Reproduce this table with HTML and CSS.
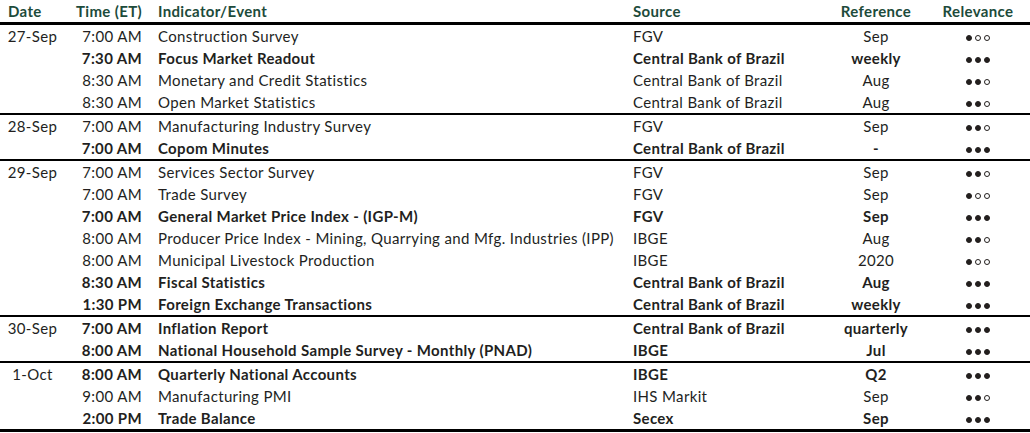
FILE: index.html
```html
<!DOCTYPE html>
<html>
<head>
<meta charset="utf-8">
<link rel="stylesheet" href="styles.css">
</head>
<body>
<table class="cal">
  <colgroup>
    <col class="c-date"><col class="c-time"><col class="c-ind"><col class="c-src"><col class="c-ref"><col class="c-rel">
  </colgroup>
  <thead>
    <tr><th class="date h-date">Date</th><th class="time">Time (ET)</th><th class="ind">Indicator/Event</th><th class="src">Source</th><th class="ref">Reference</th><th class="rel">Relevance</th></tr>
  </thead>
  <tbody>
    <tr><td class="date">27-Sep</td><td class="time">7:00 AM</td><td class="ind">Construction Survey</td><td class="src">FGV</td><td class="ref">Sep</td><td class="rel"><span class="dots"><i class="on"></i><i></i><i></i></span></td></tr>
    <tr class="b"><td class="date"></td><td class="time">7:30 AM</td><td class="ind">Focus Market Readout</td><td class="src">Central Bank of Brazil</td><td class="ref">weekly</td><td class="rel"><span class="dots"><i class="on"></i><i class="on"></i><i class="on"></i></span></td></tr>
    <tr><td class="date"></td><td class="time">8:30 AM</td><td class="ind">Monetary and Credit Statistics</td><td class="src">Central Bank of Brazil</td><td class="ref">Aug</td><td class="rel"><span class="dots"><i class="on"></i><i class="on"></i><i></i></span></td></tr>
    <tr><td class="date"></td><td class="time">8:30 AM</td><td class="ind">Open Market Statistics</td><td class="src">Central Bank of Brazil</td><td class="ref">Aug</td><td class="rel"><span class="dots"><i class="on"></i><i class="on"></i><i></i></span></td></tr>
  </tbody>
  <tbody>
    <tr><td class="date">28-Sep</td><td class="time">7:00 AM</td><td class="ind">Manufacturing Industry Survey</td><td class="src">FGV</td><td class="ref">Sep</td><td class="rel"><span class="dots"><i class="on"></i><i class="on"></i><i></i></span></td></tr>
    <tr class="b"><td class="date"></td><td class="time">7:00 AM</td><td class="ind">Copom Minutes</td><td class="src">Central Bank of Brazil</td><td class="ref">-</td><td class="rel"><span class="dots"><i class="on"></i><i class="on"></i><i class="on"></i></span></td></tr>
  </tbody>
  <tbody>
    <tr><td class="date">29-Sep</td><td class="time">7:00 AM</td><td class="ind">Services Sector Survey</td><td class="src">FGV</td><td class="ref">Sep</td><td class="rel"><span class="dots"><i class="on"></i><i class="on"></i><i></i></span></td></tr>
    <tr><td class="date"></td><td class="time">7:00 AM</td><td class="ind">Trade Survey</td><td class="src">FGV</td><td class="ref">Sep</td><td class="rel"><span class="dots"><i class="on"></i><i></i><i></i></span></td></tr>
    <tr class="b"><td class="date"></td><td class="time">7:00 AM</td><td class="ind">General Market Price Index - (IGP-M)</td><td class="src">FGV</td><td class="ref">Sep</td><td class="rel"><span class="dots"><i class="on"></i><i class="on"></i><i class="on"></i></span></td></tr>
    <tr><td class="date"></td><td class="time">8:00 AM</td><td class="ind">Producer Price Index - Mining, Quarrying and Mfg. Industries (IPP)</td><td class="src">IBGE</td><td class="ref">Aug</td><td class="rel"><span class="dots"><i class="on"></i><i class="on"></i><i></i></span></td></tr>
    <tr><td class="date"></td><td class="time">8:00 AM</td><td class="ind">Municipal Livestock Production</td><td class="src">IBGE</td><td class="ref">2020</td><td class="rel"><span class="dots"><i class="on"></i><i></i><i></i></span></td></tr>
    <tr class="b"><td class="date"></td><td class="time">8:30 AM</td><td class="ind">Fiscal Statistics</td><td class="src">Central Bank of Brazil</td><td class="ref">Aug</td><td class="rel"><span class="dots"><i class="on"></i><i class="on"></i><i class="on"></i></span></td></tr>
    <tr class="b"><td class="date"></td><td class="time">1:30 PM</td><td class="ind">Foreign Exchange Transactions</td><td class="src">Central Bank of Brazil</td><td class="ref">weekly</td><td class="rel"><span class="dots"><i class="on"></i><i class="on"></i><i class="on"></i></span></td></tr>
  </tbody>
  <tbody>
    <tr class="b"><td class="date">30-Sep</td><td class="time">7:00 AM</td><td class="ind">Inflation Report</td><td class="src">Central Bank of Brazil</td><td class="ref">quarterly</td><td class="rel"><span class="dots"><i class="on"></i><i class="on"></i><i class="on"></i></span></td></tr>
    <tr class="b"><td class="date"></td><td class="time">8:00 AM</td><td class="ind">National Household Sample Survey - Monthly (PNAD)</td><td class="src">IBGE</td><td class="ref">Jul</td><td class="rel"><span class="dots"><i class="on"></i><i class="on"></i><i class="on"></i></span></td></tr>
  </tbody>
  <tbody class="last">
    <tr class="b"><td class="date">1-Oct</td><td class="time">8:00 AM</td><td class="ind">Quarterly National Accounts</td><td class="src">IBGE</td><td class="ref">Q2</td><td class="rel"><span class="dots"><i class="on"></i><i class="on"></i><i class="on"></i></span></td></tr>
    <tr><td class="date"></td><td class="time">9:00 AM</td><td class="ind">Manufacturing PMI</td><td class="src">IHS Markit</td><td class="ref">Sep</td><td class="rel"><span class="dots"><i class="on"></i><i class="on"></i><i></i></span></td></tr>
    <tr class="b"><td class="date"></td><td class="time">2:00 PM</td><td class="ind">Trade Balance</td><td class="src">Secex</td><td class="ref">Sep</td><td class="rel"><span class="dots"><i class="on"></i><i class="on"></i><i class="on"></i></span></td></tr>
  </tbody>
</table>
</body>
</html>
```

FILE: styles.css
```css
html, body {
  margin: 0;
  padding: 0;
  background: #ffffff;
}

body {
  font-family: "Lato", "Open Sans", sans-serif;
  font-size: 15px;
  letter-spacing: 0.35px;
  color: #231f1e;
}

.cal {
  width: 1030px;
  border-collapse: collapse;
  table-layout: fixed;
}

.c-date { width: 68px; }
.c-time { width: 78px; }
.c-ind { width: 483px; }
.c-src { width: 181px; }
.c-ref { width: 132px; }
.c-rel { width: 88px; }

th, td {
  padding: 0;
  white-space: nowrap;
  overflow: hidden;
  vertical-align: middle;
}

th {
  height: 22px;
  color: #1d4b3b;
  font-weight: 700;
  line-height: 22px;
}

thead tr {
  border-bottom: 3px solid #000;
}

td {
  height: 22px;
  line-height: 22px;
}

tbody {
  border-bottom: 2px solid #000;
}

tbody.last {
  border-bottom: 3px solid #000;
}

tr.b td {
  font-weight: 700;
}

tr.b td.date {
  font-weight: 400;
}

.date {
  text-align: center;
  padding-right: 3px;
}

th.h-date {
  text-align: left;
  padding-left: 8px;
}

.time {
  text-align: right;
  padding-right: 4px;
}

.ind {
  text-align: left;
  padding-left: 12px;
}

.src {
  text-align: left;
  padding-left: 4px;
}

.ref {
  text-align: center;
}

.rel {
  text-align: center;
  padding-right: 16px;
}

.dots {
  display: inline-flex;
  gap: 3px;
  align-items: center;
  vertical-align: middle;
}

.dots i {
  display: block;
  width: 6px;
  height: 6px;
  border: 1px solid #231f1e;
  border-radius: 50%;
  box-sizing: border-box;
  background: #fff;
}

.dots i.on {
  background: #231f1e;
}
```
